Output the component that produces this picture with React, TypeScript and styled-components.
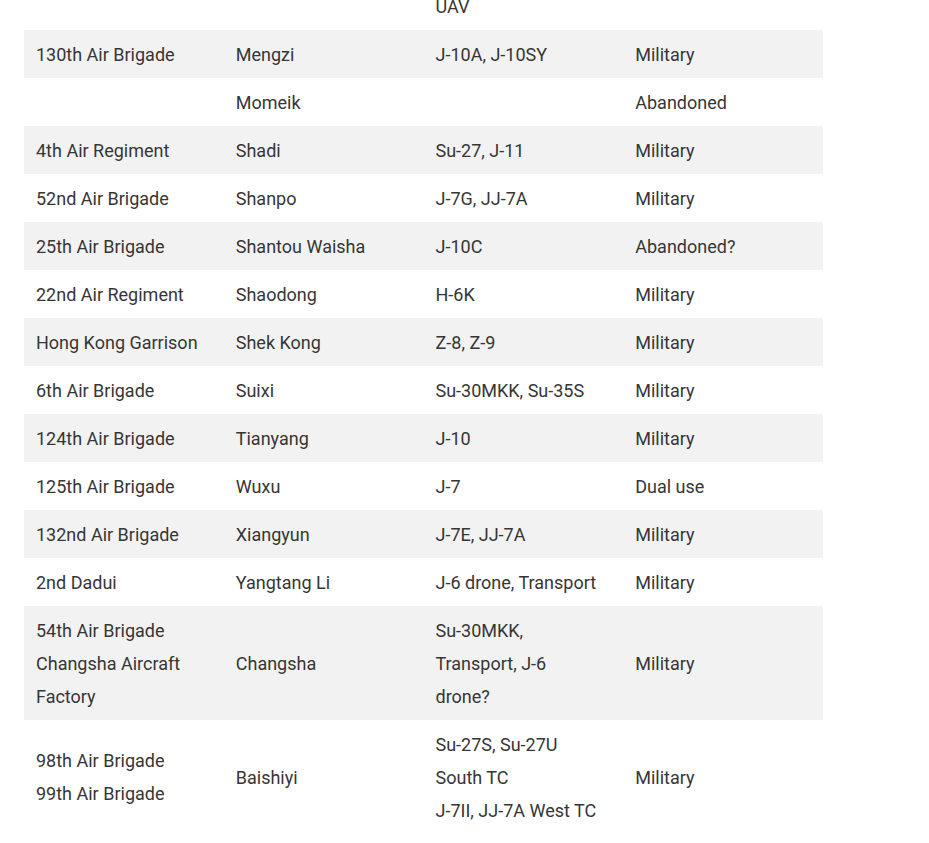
import React from "react";
import styled, { createGlobalStyle } from "styled-components";

const Global = createGlobalStyle`
  html, body { margin: 0; padding: 0; background: #ffffff; }
  body { font-family: Roboto, "Noto Sans", "Liberation Sans", sans-serif; }
`;

const Page = styled.div`
  width: 929px;
  height: 843px;
  overflow: hidden;
  padding-left: 24px;
  box-sizing: border-box;
`;

const Table = styled.table`
  width: 799px;
  margin-top: -51px;
  border-collapse: collapse;
  table-layout: fixed;
  font-size: 18px;
  line-height: 33px;
  color: #363636;
`;

const Row = styled.tr<{ $shade: boolean }>`
  background: ${(p) => (p.$shade ? "#f2f2f2" : "#ffffff")};
`;

const Cell = styled.td`
  padding: 7.5px 12px;
  vertical-align: middle;
  text-align: left;
  white-space: nowrap;
`;

type R = [string[], string[], string[], string[]];

const rows: R[] = [
  [[""], ["Luliang"], ["GJ-1, WZ-7", "UAV"], ["Military"]],
  [["130th Air Brigade"], ["Mengzi"], ["J-10A, J-10SY"], ["Military"]],
  [[""], ["Momeik"], [""], ["Abandoned"]],
  [["4th Air Regiment"], ["Shadi"], ["Su-27, J-11"], ["Military"]],
  [["52nd Air Brigade"], ["Shanpo"], ["J-7G, JJ-7A"], ["Military"]],
  [["25th Air Brigade"], ["Shantou Waisha"], ["J-10C"], ["Abandoned?"]],
  [["22nd Air Regiment"], ["Shaodong"], ["H-6K"], ["Military"]],
  [["Hong Kong Garrison"], ["Shek Kong"], ["Z-8, Z-9"], ["Military"]],
  [["6th Air Brigade"], ["Suixi"], ["Su-30MKK, Su-35S"], ["Military"]],
  [["124th Air Brigade"], ["Tianyang"], ["J-10"], ["Military"]],
  [["125th Air Brigade"], ["Wuxu"], ["J-7"], ["Dual use"]],
  [["132nd Air Brigade"], ["Xiangyun"], ["J-7E, JJ-7A"], ["Military"]],
  [["2nd Dadui"], ["Yangtang Li"], ["J-6 drone, Transport"], ["Military"]],
  [
    ["54th Air Brigade", "Changsha Aircraft", "Factory"],
    ["Changsha"],
    ["Su-30MKK,", "Transport, J-6", "drone?"],
    ["Military"],
  ],
  [
    ["98th Air Brigade", "99th Air Brigade"],
    ["Baishiyi"],
    ["Su-27S, Su-27U", "South TC", "J-7II, JJ-7A West TC"],
    ["Military"],
  ],
];

const Lines: React.FC<{ lines: string[] }> = ({ lines }) => (
  <>
    {lines.map((l, i) => (
      <React.Fragment key={i}>
        {i > 0 && <br />}
        {l}
      </React.Fragment>
    ))}
  </>
);

export default function App() {
  return (
    <>
      <Global />
      <Page>
        <Table>
          <tbody>
            {rows.map((r, i) => (
              <Row key={i} $shade={i % 2 === 1}>
                {r.map((c, j) => (
                  <Cell key={j}>
                    <Lines lines={c} />
                  </Cell>
                ))}
              </Row>
            ))}
          </tbody>
        </Table>
      </Page>
    </>
  );
}
